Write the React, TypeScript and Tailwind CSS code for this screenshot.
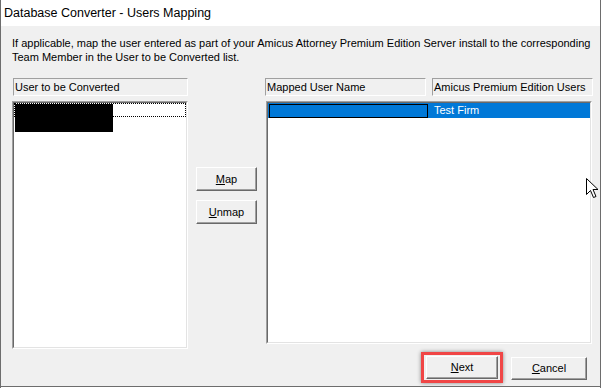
import React from "react";

const btn =
  "flex items-center justify-center bg-[#f0f0f0] border-t border-l border-t-white border-l-white border-b border-r border-b-[#696969] border-r-[#696969] shadow-[inset_-1px_-1px_0_#a0a0a0] text-[11px] text-black";

function Header({ w, children }: { w: string; children: React.ReactNode }) {
  return (
    <div
      className={`${w} h-[18px] border-t border-l border-t-[#a0a0a0] border-l-[#a0a0a0] border-b border-r border-b-white border-r-white pl-[1px] leading-[16px] text-[11px] text-black whitespace-nowrap overflow-hidden`}
    >
      {children}
    </div>
  );
}

function ListBox({ w, h, children }: { w: string; h: string; children?: React.ReactNode }) {
  return (
    <div className={`${w} ${h} border-t border-l border-t-[#a0a0a0] border-l-[#a0a0a0] border-b border-r border-b-white border-r-white`}>
      <div className="w-full h-full border-t border-l border-t-[#696969] border-l-[#696969] border-b border-r border-b-[#e3e3e3] border-r-[#e3e3e3] bg-white overflow-hidden">
        {children}
      </div>
    </div>
  );
}

export default function App() {
  return (
    <div className="relative w-[601px] h-[388px] bg-[#f0f0f0] border-l border-r border-[#6d6d6d] flex flex-col font-['Liberation_Sans',Arial,sans-serif] text-black overflow-hidden">
      <div className="h-[26px] bg-white pl-[3px] text-[12.5px] leading-[26px] shrink-0">
        Database Converter - Users Mapping
      </div>
      <div className="pl-[11px] pt-[10px] text-[11px] leading-[14px] whitespace-nowrap">
        <div>If applicable, map the user entered as part of your Amicus Attorney Premium Edition Server install to the corresponding</div>
        <div>Team Member in the User to be Converted list.</div>
      </div>
      <div className="flex items-start pl-[11px] mt-[14px]">
        <div className="flex flex-col w-[176px]">
          <div className="pl-[1px]">
            <Header w="w-[175px]">User to be Converted</Header>
          </div>
          <div className="mt-[5px]">
            <ListBox w="w-[176px]" h="h-[248px]">
              <div className="relative h-[14px] border border-dotted border-black">
                <div className="absolute left-0 top-0 w-[98px] h-[28px] bg-black" />
              </div>
            </ListBox>
          </div>
        </div>
        <div className="flex flex-col ml-[8px] mt-[89px] gap-[9px]">
          <div className={`${btn} w-[61px] h-[24px]`}>
            <span><span className="underline">M</span>ap</span>
          </div>
          <div className={`${btn} w-[61px] h-[24px]`}>
            <span><span className="underline">U</span>nmap</span>
          </div>
        </div>
        <div className="flex flex-col ml-[8px] w-[328px]">
          <div className="flex gap-[6px]">
            <Header w="w-[161px]">Mapped User Name</Header>
            <Header w="w-[161px]">Amicus Premium Edition Users</Header>
          </div>
          <div className="mt-[5px] pl-[1px]">
            <ListBox w="w-[326px]" h="h-[243px]">
              <div className="flex items-center h-[15px] bg-[#0078d7] text-white text-[11px]">
                <div className="w-[159px] h-[14px] border border-black bg-[#0078d7] ml-[1px]" />
                <div className="ml-[6px] leading-[15px]">Test Firm</div>
              </div>
            </ListBox>
          </div>
          <div className="flex items-start justify-end mt-[8px] pr-[6px] gap-[8px]">
            <div className="border-[3px] border-[#f04646] px-[2px] py-[1px] shadow-[0_0_4px_rgba(0,0,0,0.45)]">
              <div className={`${btn} w-[72px] h-[23px]`}>
                <span><span className="underline">N</span>ext</span>
              </div>
            </div>
            <div className={`${btn} w-[76px] h-[23px] mt-[5px]`}>
              <span><span className="underline">C</span>ancel</span>
            </div>
          </div>
        </div>
      </div>
      <div className="absolute left-0 right-0 bottom-0 h-[2px] border-t border-[#6d6d6d] bg-white" />
      <svg className="absolute left-[585px] top-[178px]" width="13" height="21" viewBox="0 0 13 21">
        <path d="M0.5 0.5 L0.5 16.5 L4.5 12.5 L7.5 19.5 L10 18.5 L7 11.5 L12 11.5 Z" fill="white" stroke="black" strokeWidth="1" />
      </svg>
    </div>
  );
}
